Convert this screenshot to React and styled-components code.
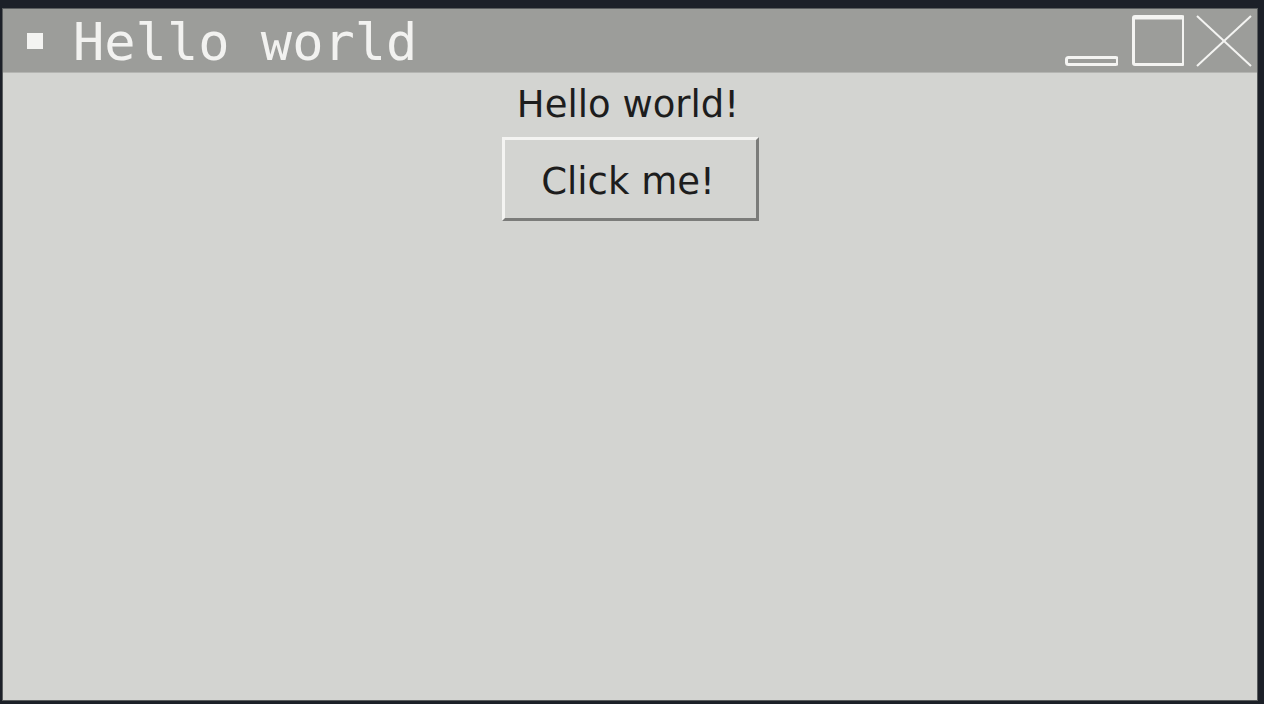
import React from "react";
import styled, { createGlobalStyle } from "styled-components";

const Global = createGlobalStyle`
  html, body { margin: 0; padding: 0; background: #1c2028; }
  #root { width: 1264px; height: 704px; }
`;

const Screen = styled.div`
  box-sizing: border-box;
  width: 1264px;
  height: 704px;
  padding: 9px 7px 4px 3px;
  background: #1c2028;
`;

const Window = styled.div`
  display: flex;
  flex-direction: column;
  height: 100%;
  background: #d3d4d1;
  box-shadow: 0 0 0 1px #5a5d5e;
`;

const TitleBar = styled.div`
  display: flex;
  align-items: center;
  height: 63px;
  flex: none;
  padding: 0 5px 0 24px;
  background: #9c9d9a;
  border-bottom: 1px solid #b4b5b2;
`;

const Bullet = styled.span`
  width: 16px;
  height: 16px;
  background: #f4f4f2;
  flex: none;
`;

const Title = styled.span`
  margin-left: 30px;
  padding-top: 3px;
  font-family: "DejaVu Sans Mono", monospace;
  font-size: 52px;
  color: #f2f2f0;
  white-space: pre;
`;

const Controls = styled.div`
  margin-left: auto;
  display: flex;
  align-items: center;
  gap: 12px;
  height: 100%;
`;

const Ctl = styled.svg`
  display: block;
  flex: none;
`;

const Content = styled.div`
  flex: 1;
  display: flex;
  flex-direction: column;
  align-items: center;
  padding-top: 10px;
`;

const Label = styled.div`
  font-family: "DejaVu Sans", sans-serif;
  font-size: 37px;
  color: #1d1d1d;
  line-height: 43px;
  margin-right: 4px;
`;

const Button = styled.button`
  margin-top: 11px;
  box-sizing: border-box;
  width: 257px;
  height: 84px;
  padding: 4px 4px 0 0;
  font-family: "DejaVu Sans", sans-serif;
  font-size: 37px;
  line-height: 43px;
  color: #1d1d1d;
  background: #d3d4d1;
  border: 3px solid;
  border-color: #f4f4f2 #7b7c7a #7b7c7a #f4f4f2;
`;

export default function App() {
  return (
    <>
      <Global />
      <Screen>
        <Window>
          <TitleBar>
            <Bullet />
            <Title>Hello world</Title>
            <Controls>
              <Ctl width="54" height="56" viewBox="0 0 54 56">
                <rect x="2.5" y="44.5" width="51" height="7" rx="2" fill="none" stroke="#f4f4f2" strokeWidth="3" />
              </Ctl>
              <Ctl width="54" height="56" viewBox="0 0 54 56">
                <rect x="3.5" y="3.5" width="50" height="48" rx="1.5" fill="none" stroke="#f4f4f2" strokeWidth="3" />
                <line x1="3" y1="5" x2="53" y2="5" stroke="#f4f4f2" strokeWidth="3" />
              </Ctl>
              <Ctl width="56" height="56" viewBox="0 0 56 56">
                <line x1="1" y1="3" x2="55" y2="53" stroke="#f4f4f2" strokeWidth="2" />
                <line x1="55" y1="3" x2="1" y2="53" stroke="#f4f4f2" strokeWidth="2" />
              </Ctl>
            </Controls>
          </TitleBar>
          <Content>
            <Label>Hello world!</Label>
            <Button>Click me!</Button>
          </Content>
        </Window>
      </Screen>
    </>
  );
}
